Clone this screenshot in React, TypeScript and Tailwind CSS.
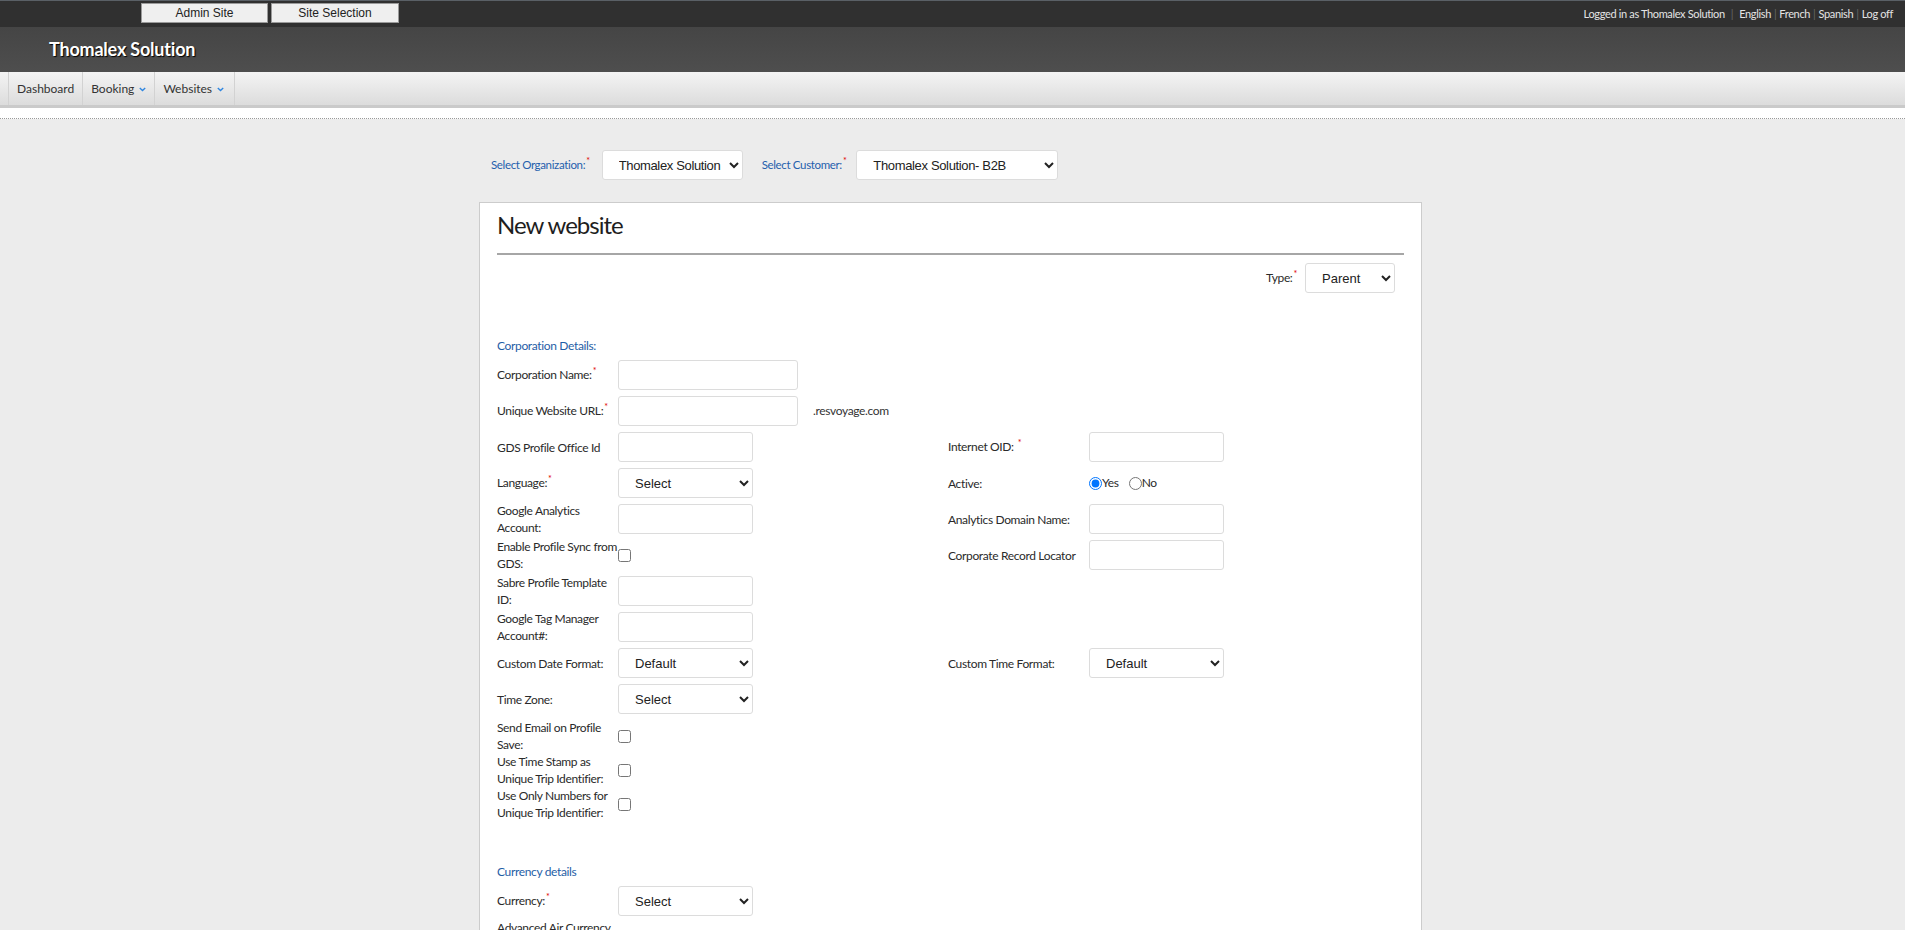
import { ReactNode } from "react";

const selectBase =
  "h-[30px] rounded-[3px] border border-[#dcdcdc] bg-white pl-[12px] text-[13px] text-[#222] font-['Liberation_Sans',Arial,sans-serif] outline-none";
const inputCls =
  "my-[3px] h-[30px] rounded-[3px] border border-[#dcdcdc] bg-white px-2 text-[13px] outline-none";

function Req({ space }: { space?: boolean }) {
  return (
    <span className={"relative -top-[5px] text-[9px] text-[#e00000] " + (space ? "ml-[4px]" : "ml-px")}>*</span>
  );
}

function Label({ lines, req, space }: { lines: string[]; req?: boolean; space?: boolean }) {
  return (
    <div className="text-[12px] leading-[17px] tracking-[-0.35px] text-[#2a2a2a]">
      {lines.map((l, i) => (
        <div key={i} className="whitespace-nowrap">
          {l}
          {req && i === lines.length - 1 && <Req space={space} />}
        </div>
      ))}
    </div>
  );
}

function Row({
  label,
  req,
  children,
  right,
}: {
  label: string[];
  req?: boolean;
  children?: ReactNode;
  right?: ReactNode;
}) {
  return (
    <>
      <Label lines={label} req={req} />
      <div className="flex items-center">{children}</div>
      {right ?? (
        <>
          <div />
          <div />
        </>
      )}
    </>
  );
}

function Select({ value, cls = "my-[3px] w-[135px]" }: { value: string; cls?: string }) {
  return (
    <select className={selectBase + " " + cls} defaultValue={value}>
      <option>{value}</option>
    </select>
  );
}

function Check() {
  return <input type="checkbox" className="h-[13px] w-[13px]" />;
}

function Chevron() {
  return (
    <svg width="7" height="5" viewBox="0 0 7 5" className="ml-[5px] mt-[2px]">
      <path d="M0.8 1 L3.5 3.6 L6.2 1" fill="none" stroke="#2f86e0" strokeWidth="1.4" />
    </svg>
  );
}

export default function App() {
  return (
    <div className="h-screen overflow-hidden bg-[#ececec] font-['Lato','Noto_Sans',sans-serif]">
      {/* top strip */}
      <div className="flex h-[27px] items-start justify-between border-t border-[#5a6066] bg-[#303030]">
        <div className="ml-[141px] mt-[2px] flex gap-[3px]">
          <button className="h-[20px] w-[127px] border border-[#9a9a9a] bg-[#efefef] font-['Liberation_Sans',Arial,sans-serif] text-[12px] text-[#222]">
            Admin Site
          </button>
          <button className="h-[20px] w-[128px] border border-[#9a9a9a] bg-[#efefef] font-['Liberation_Sans',Arial,sans-serif] text-[12px] text-[#222]">
            Site Selection
          </button>
        </div>
        <div className="mr-[12px] flex h-full items-center text-[11px] tracking-[-0.35px] text-[#e4e4e4]">
          <span>Logged in as Thomalex Solution</span>
          <span className="mx-[6px] text-[#666]">|</span>
          <span>English</span>
          <span className="mx-[3px] text-[#666]">|</span>
          <span>French</span>
          <span className="mx-[3px] text-[#666]">|</span>
          <span>Spanish</span>
          <span className="mx-[3px] text-[#666]">|</span>
          <span>Log off</span>
        </div>
      </div>

      {/* header */}
      <div className="flex h-[45px] items-center bg-linear-to-b from-[#454545] to-[#4e4e4e] pl-[49px]">
        <span className="text-[18px] font-bold tracking-[-0.2px] text-white [text-shadow:1px_1px_1px_#000]">
          Thomalex Solution
        </span>
      </div>

      {/* nav */}
      <div className="flex h-[36px] items-stretch border-b-[3px] border-[#cacaca] bg-linear-to-b from-[#f4f4f4] to-[#dcdcdc] pl-[8px] text-[12px] text-[#333]">
        <div className="flex items-center border-x border-[#d2d2d2] px-[8px]">Dashboard</div>
        <div className="flex items-center border-r border-[#d2d2d2] pl-[8px] pr-[8px]">
          Booking
          <Chevron />
        </div>
        <div className="flex items-center border-r border-[#d2d2d2] pl-[8px] pr-[10px]">
          Websites
          <Chevron />
        </div>
      </div>
      <div className="h-[11px] border-b border-dotted border-[#9a9a9a] bg-white" />

      <div className="pr-[4px]">
        <div className="mx-auto w-[943px]">
          {/* org / customer pickers */}
          <div className="mt-[31px] flex h-[30px] items-center pl-[12px] text-[11.5px] tracking-[-0.35px] text-[#2560ad]">
            <span>
              Select Organization:
              <Req />
            </span>
            <Select value="Thomalex Solution" cls="ml-[12px] w-[141px]" />
            <span className="ml-[19px]">
              Select Customer:
              <Req />
            </span>
            <Select value="Thomalex Solution- B2B" cls="ml-[10px] w-[202px]" />
          </div>

          {/* card */}
          <div className="mt-[22px] h-[900px] border border-[#cccccc] bg-white px-[17px] pt-[7px]">
            <h1 className="text-[24px] leading-[30px] tracking-[-1px] text-[#1e1e1e]">New website</h1>
            <div className="mt-[13px] h-[2px] bg-[#a6a6a6]" />

            <div className="mt-[8px] flex items-center justify-end pr-[9px]">
              <span className="mr-[8px] text-[12px] tracking-[-0.35px] text-[#2a2a2a]">
                Type:
                <Req />
              </span>
              <Select value="Parent" cls="w-[90px]" />
            </div>

            <div className="mb-[3px] mt-[44px] text-[12px] leading-[17px] tracking-[-0.35px] text-[#1f5ea6]">
              Corporation Details:
            </div>

            <div className="grid grid-cols-[121px_330px_141px_1fr] items-center">
              <Row label={["Corporation Name:"]} req>
                <input className={inputCls + " w-[180px]"} />
              </Row>
              <Row label={["Unique Website URL:"]} req>
                <input className={inputCls + " w-[180px]"} />
                <span className="ml-[15px] text-[12px] tracking-[-0.35px] text-[#333]">.resvoyage.com</span>
              </Row>
              <Row
                label={["GDS Profile Office Id"]}
                right={
                  <>
                    <Label lines={["Internet OID:"]} req space />
                    <div>
                      <input className={inputCls + " w-[135px]"} />
                    </div>
                  </>
                }
              >
                <input className={inputCls + " w-[135px]"} />
              </Row>
              <Row
                label={["Language:"]}
                req
                right={
                  <>
                    <Label lines={["Active:"]} />
                    <div className="flex items-center text-[12px] tracking-[-0.35px] text-[#2a2a2a]">
                      <input type="radio" name="active" defaultChecked className="h-[13px] w-[13px]" />
                      <span>Yes</span>
                      <input type="radio" name="active" className="ml-[10px] h-[13px] w-[13px]" />
                      <span>No</span>
                    </div>
                  </>
                }
              >
                <Select value="Select" />
              </Row>
              <Row
                label={["Google Analytics", "Account:"]}
                right={
                  <>
                    <Label lines={["Analytics Domain Name:"]} />
                    <div>
                      <input className={inputCls + " w-[135px]"} />
                    </div>
                  </>
                }
              >
                <input className={inputCls + " w-[135px]"} />
              </Row>
              <Row
                label={["Enable Profile Sync from", "GDS:"]}
                right={
                  <>
                    <Label lines={["Corporate Record Locator"]} />
                    <div>
                      <input className={inputCls + " w-[135px]"} />
                    </div>
                  </>
                }
              >
                <Check />
              </Row>
              <Row label={["Sabre Profile Template", "ID:"]}>
                <input className={inputCls + " w-[135px]"} />
              </Row>
              <Row label={["Google Tag Manager", "Account#:"]}>
                <input className={inputCls + " w-[135px]"} />
              </Row>
              <Row
                label={["Custom Date Format:"]}
                right={
                  <>
                    <Label lines={["Custom Time Format:"]} />
                    <div>
                      <Select value="Default" />
                    </div>
                  </>
                }
              >
                <Select value="Default" />
              </Row>
              <Row label={["Time Zone:"]}>
                <Select value="Select" />
              </Row>
            </div>

            <div className="mt-[2px] grid grid-cols-[121px_330px_141px_1fr] items-center">
              <Row label={["Send Email on Profile", "Save:"]}>
                <Check />
              </Row>
              <Row label={["Use Time Stamp as", "Unique Trip Identifier:"]}>
                <Check />
              </Row>
              <Row label={["Use Only Numbers for", "Unique Trip Identifier:"]}>
                <Check />
              </Row>
            </div>

            <div className="mb-[3px] mt-[42px] text-[12px] leading-[17px] tracking-[-0.35px] text-[#1f5ea6]">
              Currency details
            </div>
            <div className="grid grid-cols-[121px_330px_141px_1fr] items-center">
              <Row label={["Currency:"]} req>
                <Select value="Select" />
              </Row>
              <Row label={["Advanced Air Currency", "Conversion:"]}>
                <Check />
              </Row>
            </div>
          </div>
        </div>
      </div>
    </div>
  );
}
